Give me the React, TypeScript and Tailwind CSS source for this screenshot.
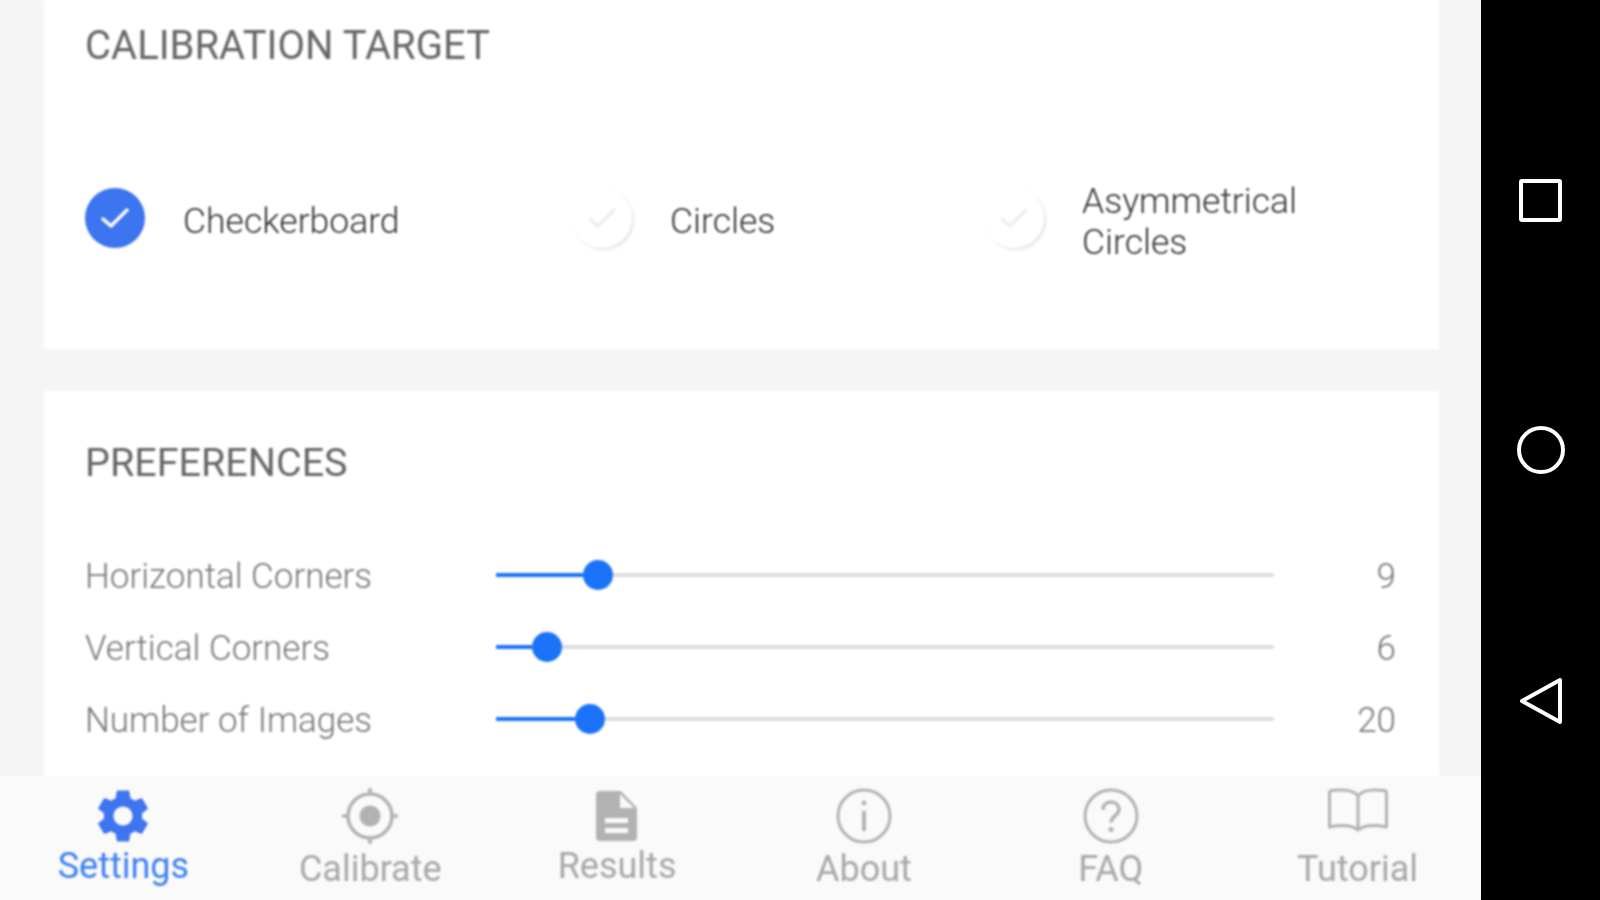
import React from "react";

const font = { fontFamily: 'Roboto, "Noto Sans", sans-serif' };

function Radio({ checked }: { checked?: boolean }) {
  return (
    <div
      className={
        checked
          ? "flex h-[60px] w-[60px] shrink-0 items-center justify-center rounded-full bg-[#3d74f0]"
          : "flex h-[60px] w-[60px] shrink-0 items-center justify-center rounded-full bg-white shadow-[2px_2px_3px_rgba(0,0,0,0.10)]"
      }
    >
      <svg width="30" height="24" viewBox="0 0 30 24" fill="none">
        <path
          d="M3 13 L11 20 L27 4"
          stroke={checked ? "#ffffff" : "#eeeeee"}
          strokeWidth="3.5"
          strokeLinecap="round"
          strokeLinejoin="round"
        />
      </svg>
    </div>
  );
}

function SliderRow({ label, fill, value }: { label: string; fill: string; value: string }) {
  return (
    <div className="flex h-[72px] items-center">
      <div className="w-[411px] pt-[3px] text-[35px] font-light leading-[42px] text-[#777777]">{label}</div>
      <div className="mb-[1px] flex w-[778px] items-center">
        <div className={"h-[4px] bg-[#1a73f8] " + fill} />
        <div className="h-[30px] w-[30px] shrink-0 rounded-full bg-[#1a73f8]" />
        <div className="h-[4px] flex-1 bg-[#dddddd]" />
      </div>
      <div className="flex-1 pt-[3px] text-right text-[35px] font-light leading-[42px] text-[#777777]">{value}</div>
    </div>
  );
}

const GEAR =
  "M19.14 12.94c.04-.3.06-.61.06-.94 0-.32-.02-.64-.07-.94l2.03-1.58a.49.49 0 0 0 .12-.61l-1.92-3.32a.488.488 0 0 0-.59-.22l-2.39.96c-.5-.38-1.03-.7-1.62-.94l-.36-2.54a.484.484 0 0 0-.48-.41h-3.84c-.24 0-.43.17-.47.41l-.36 2.54c-.59.24-1.13.57-1.62.94l-2.39-.96c-.22-.08-.47 0-.59.22L2.74 8.87c-.12.21-.08.47.12.61l2.03 1.58c-.05.3-.09.63-.09.94s.02.64.07.94l-2.03 1.58a.49.49 0 0 0-.12.61l1.92 3.32c.12.22.37.29.59.22l2.39-.96c.5.38 1.03.7 1.62.94l.36 2.54c.05.24.24.41.48.41h3.84c.24 0 .44-.17.47-.41l.36-2.54c.59-.24 1.13-.56 1.62-.94l2.39.96c.22.08.47 0 .59-.22l1.92-3.32c.12-.22.07-.47-.12-.61l-2.01-1.58zM12 15.6c-1.98 0-3.6-1.62-3.6-3.6s1.62-3.6 3.6-3.6 3.6 1.62 3.6 3.6-1.62 3.6-3.6 3.6z";

const G = "#b2b2b2";

const icons: Record<string, React.ReactNode> = {
  Settings: (
    <svg width="52" height="52" viewBox="2.4 2.2 19.2 19.6">
      <path d={GEAR} fill="#3d74f0" />
    </svg>
  ),
  Calibrate: (
    <svg width="56" height="56" viewBox="0 0 56 56" fill="none">
      <circle cx="28" cy="28" r="22" stroke={G} strokeWidth="3.5" />
      <circle cx="28" cy="28" r="10.5" fill={G} />
      <path d="M28 0v6M28 50v6M0 28h6M50 28h6" stroke={G} strokeWidth="3.5" />
    </svg>
  ),
  Results: (
    <svg width="42" height="52" viewBox="0 0 42 52" fill="none">
      <path
        d="M4 1h21l16 17v29a4 4 0 0 1-4 4H4a4 4 0 0 1-4-4V5a4 4 0 0 1 4-4z"
        fill={G}
      />
      <path d="M24 4v14h14z" fill="#fafafa" />
      <path d="M9 28h23v5H9zM9 38h23v5H9z" fill="#fafafa" />
    </svg>
  ),
  About: (
    <svg width="56" height="56" viewBox="0 0 56 56" fill="none">
      <circle cx="28" cy="28" r="26" stroke={G} strokeWidth="3" />
      <circle cx="28" cy="15" r="2.4" fill={G} />
      <path d="M28 23v20" stroke={G} strokeWidth="4" />
    </svg>
  ),
  FAQ: (
    <svg width="56" height="56" viewBox="0 0 56 56" fill="none">
      <circle cx="28" cy="28" r="26" stroke={G} strokeWidth="3" />
      <path
        d="M20 22c0-5 3.5-8 8-8s8 3 8 7.500c0 6-8 6.500-8 13"
        stroke={G}
        strokeWidth="3.500"
      />
      <circle cx="28" cy="41.500" r="2.500" fill={G} />
    </svg>
  ),
  Tutorial: (
    <svg width="60" height="56" viewBox="0 0 60 56" fill="none">
      <path
        d="M30 8C26 2 14 1.500 4 2.500C2.500 2.600 1.500 3.500 1.500 5V39C12 37 24 37 30 42C36 37 48 37 58.500 39V5C58.500 3.500 57.500 2.600 56 2.500C46 1.500 34 2 30 8ZM30 8V42"
        stroke={G}
        strokeWidth="3"
        strokeLinejoin="round"
      />
    </svg>
  ),
};

function Tab({ label, lift, active }: { label: string; lift?: boolean; active?: boolean }) {
  return (
    <div className="flex flex-col items-center pt-[12px]">
      <div className="flex h-[56px] items-center justify-center">{icons[label]}</div>
      <div
        className={
          "text-[36px] leading-[40px] " +
          (lift ? "mt-[2px] " : "mt-[5px] ") +
          (active ? "text-[#3d80f5]" : "text-[#a8a8a8]")
        }
      >
        {label}
      </div>
    </div>
  );
}

export default function App() {
  return (
    <div className="flex h-[900px] w-[1600px] overflow-hidden bg-black" style={font}>
      <div className="w-[1481px] overflow-hidden bg-[#f8f8f8]">
        <div className="flex h-[900px] flex-col bg-[#f5f5f5] blur-[1px]">
          <div className="h-[776px] overflow-hidden pl-[44px] pr-[42px]">
            <section className="h-[349px] bg-white pl-[41px] pt-[25px]">
              <h2 className="text-[40px] font-normal leading-[42px] text-[#666666]">CALIBRATION TARGET</h2>
              <div className="mt-[110px] flex h-[82px] items-center text-[35.5px] font-light leading-[41px] text-[#333333]">
                <div className="flex w-[487px] items-center gap-[38px]">
                  <Radio checked />
                  <span className="pt-[6px]">Checkerboard</span>
                </div>
                <div className="flex w-[412px] items-center gap-[38px]">
                  <Radio />
                  <span className="pt-[6px]">Circles</span>
                </div>
                <div className="flex items-center gap-[38px]">
                  <Radio />
                  <span className="pt-[7px]">
                    Asymmetrical
                    <br />
                    Circles
                  </span>
                </div>
              </div>
            </section>
            <section className="mt-[42px] h-[400px] bg-white pl-[41px] pr-[43px] pt-[51px]">
              <h2 className="text-[39.5px] font-normal leading-[42px] text-[#666666]">PREFERENCES</h2>
              <div className="mt-[55px]">
                <SliderRow label="Horizontal Corners" fill="w-[87px]" value="9" />
                <SliderRow label="Vertical Corners" fill="w-[36px]" value="6" />
                <SliderRow label="Number of Images" fill="w-[79px]" value="20" />
              </div>
            </section>
          </div>
          <nav className="grid h-[124px] grid-cols-6 bg-[#fafafa]">
            <Tab label="Settings" lift active />
            <Tab label="Calibrate" />
            <Tab label="Results" lift />
            <Tab label="About" />
            <Tab label="FAQ" />
            <Tab label="Tutorial" />
          </nav>
        </div>
      </div>
      <aside className="flex flex-1 flex-col items-center justify-between pb-[175px] pt-[179px] blur-[0.7px]">
        <div className="h-[43px] w-[43px] rounded-[3px] border-[4px] border-white" />
        <div className="h-[48px] w-[48px] rounded-full border-[4px] border-white" />
        <svg width="44" height="48" viewBox="0 0 44 48" fill="none">
          <path d="M3 24 L41 3 V45 Z" stroke="#ffffff" strokeWidth="4" strokeLinejoin="round" />
        </svg>
      </aside>
    </div>
  );
}
